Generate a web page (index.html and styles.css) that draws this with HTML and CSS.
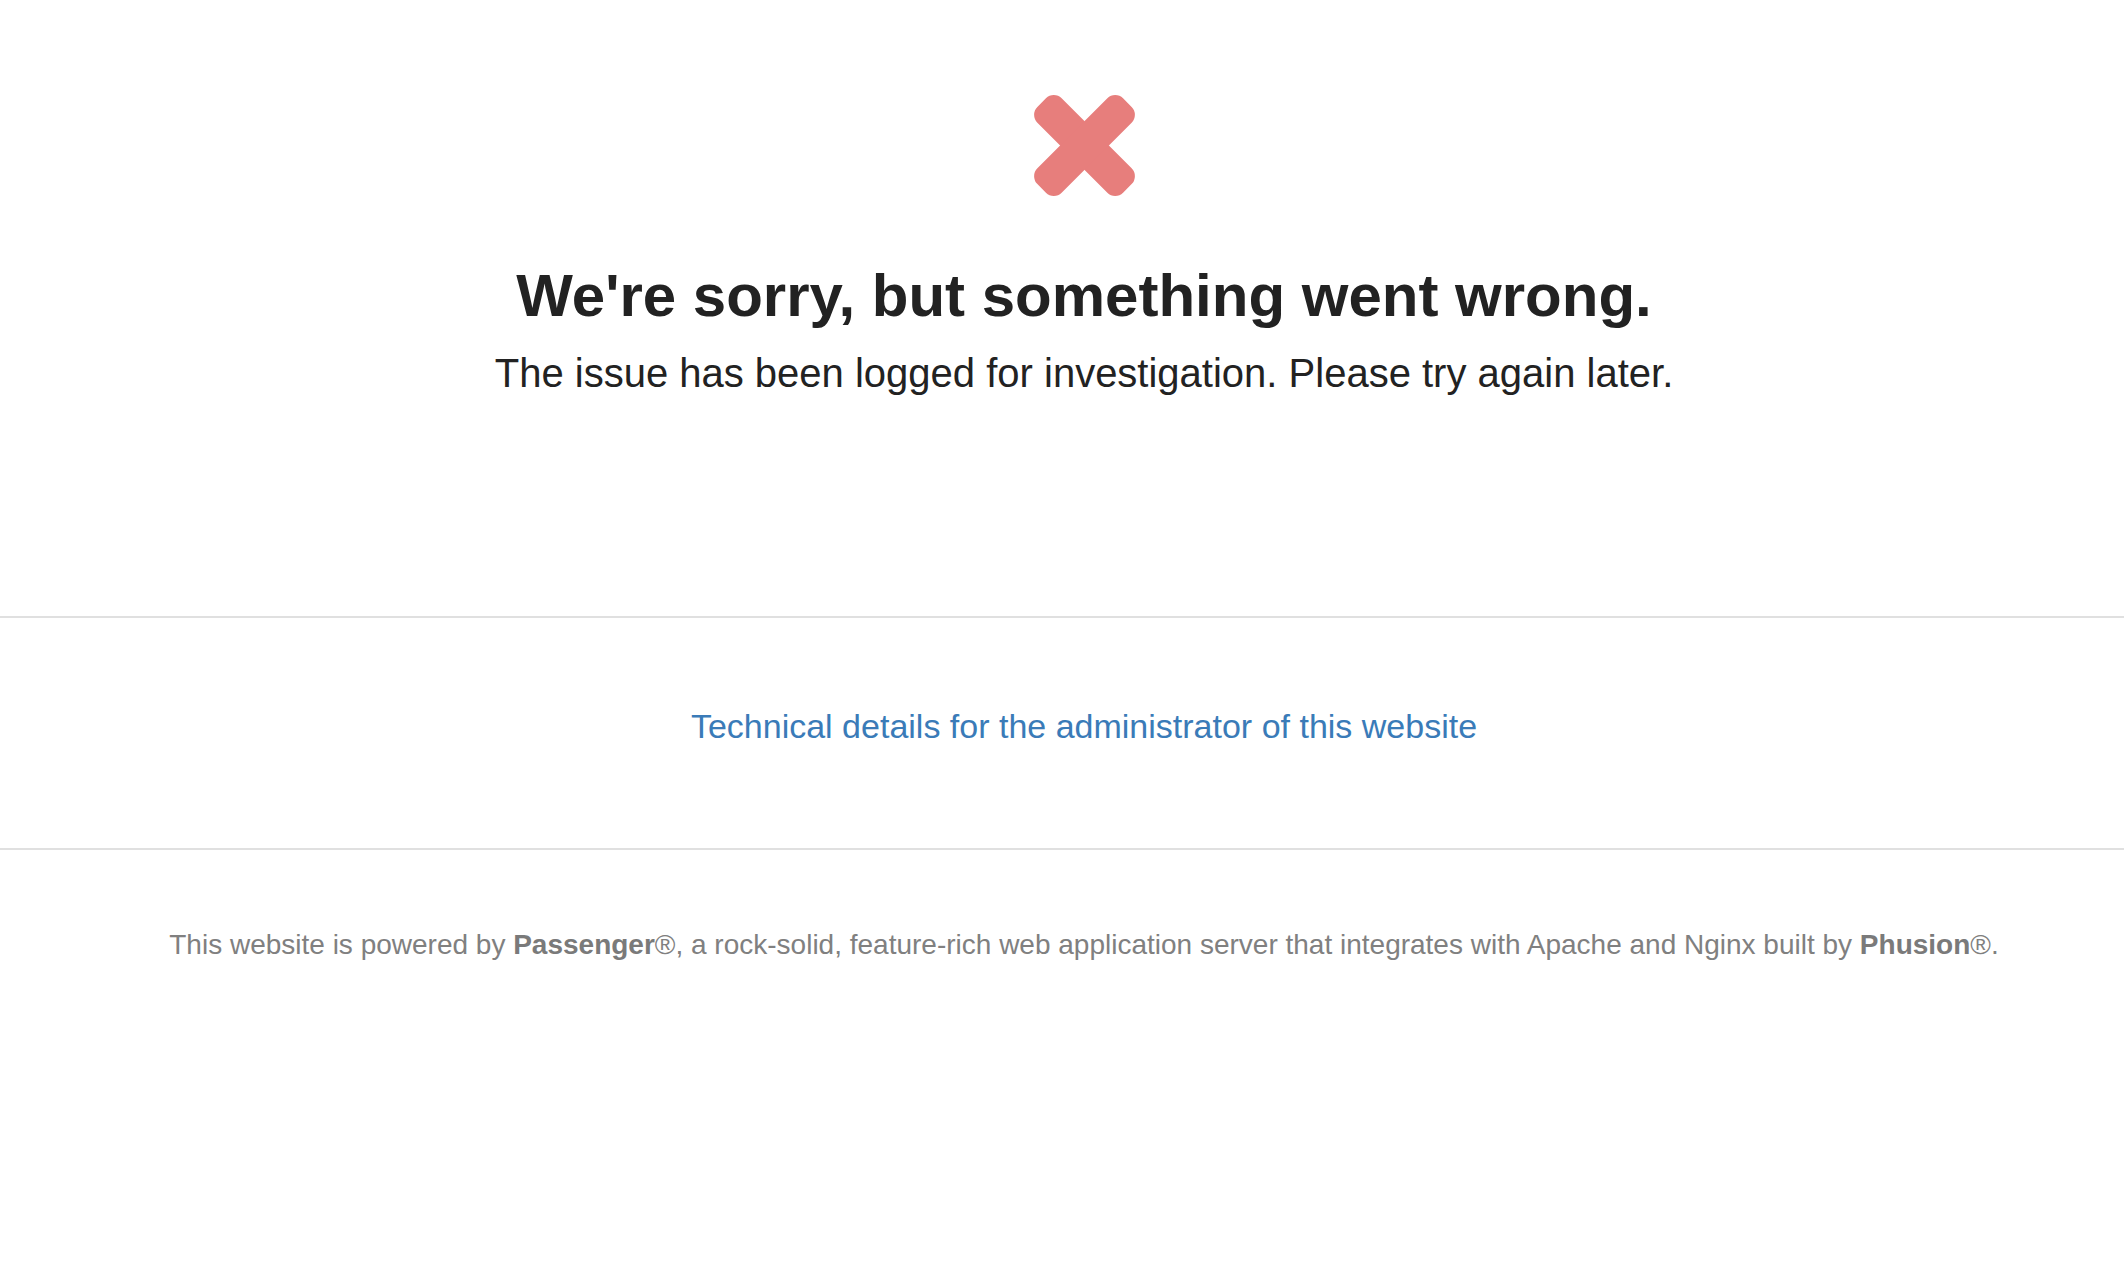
FILE: index.html
```
<!DOCTYPE html>
<html>
	<head>
	<meta charset="utf-8">
	<title>We're sorry, but something went wrong</title>
	<link rel="stylesheet" href="styles.css">
	</head>
	<body>
		<div class="container">
			<svg class="error_icon" viewBox="0 0 100 100" width="101" height="101">
				<rect x="-10" y="33" width="120" height="34" rx="11" fill="#e77e7c" transform="rotate(45 50 50)"/>
				<rect x="-10" y="33" width="120" height="34" rx="11" fill="#e77e7c" transform="rotate(-45 50 50)"/>
			</svg>
			<h1>We're sorry, but something went wrong.</h1>
			<p class="lead">The issue has been logged for investigation. Please try again later.</p>
		</div>

		<div class="details">
			<a href="#">Technical details for the administrator of this website</a>
		</div>

		<div class="footer">
			<p>This website is powered by <b>Passenger</b>&reg;, a rock-solid, feature-rich web application server that integrates with Apache and Nginx built by <b>Phusion</b>&reg;.</p>
		</div>
	</body>
</html>
```

FILE: styles.css
```
	html, body {
		margin: 0px;
		background: #fff;
		font-family: "Liberation Sans", Arial, sans-serif;
		color: #222;
	}

	div.container {
		text-align: center;
		padding: 95px 0 220px 44px;
		border-bottom: 2px solid #e0e0e0;
	}

	svg.error_icon {
		display: block;
		margin: 0 auto;
	}

	h1 {
		font-size: 60px;
		line-height: 72px;
		font-weight: bold;
		margin: 64px 0 0 0;
	}

	p.lead {
		font-size: 40px;
		line-height: 46px;
		margin: 18px 0 0 0;
	}

	div.details {
		text-align: center;
		font-size: 34px;
		line-height: 40px;
		padding: 88px 0 102px 44px;
		border-bottom: 2px solid #e0e0e0;
	}

	div.details a {
		color: #3a7bb8;
		text-decoration: none;
	}

	div.footer {
		text-align: center;
		padding: 78px 0 0 44px;
	}

	div.footer p {
		margin: 0;
		font-size: 28px;
		line-height: 34px;
		color: #808080;
	}

	div.footer b {
		color: #7a7a7a;
	}
```
